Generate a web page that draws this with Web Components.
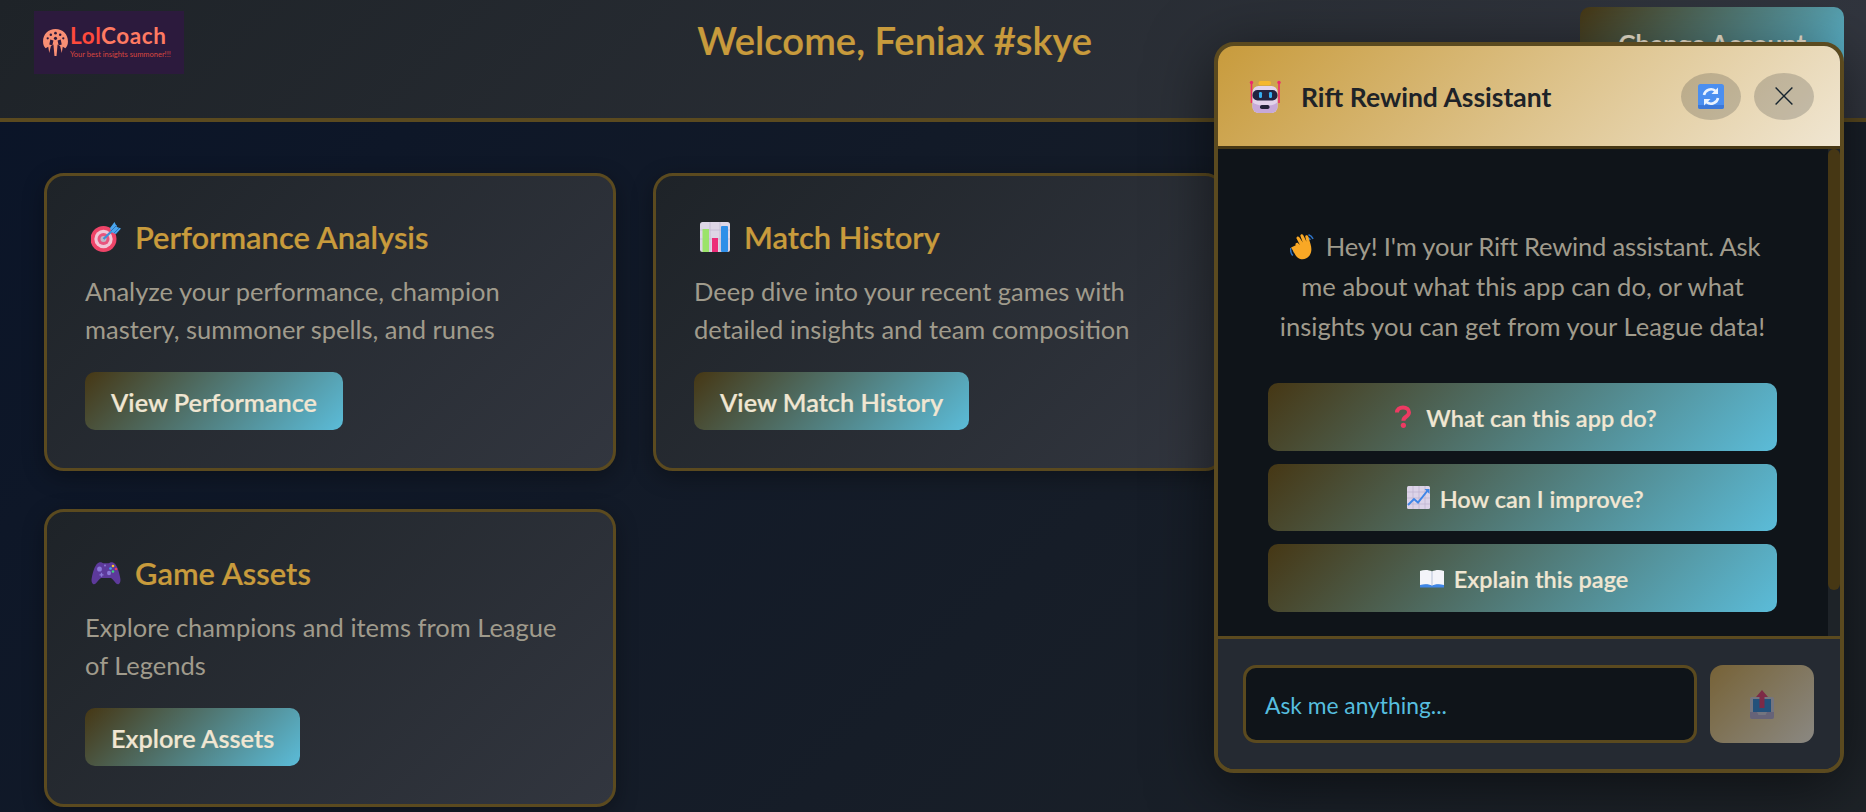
<!doctype html>
<html lang="en"><head><meta charset="utf-8"><title>LolCoach</title>
<style>
html,body{margin:0;height:812px;overflow:hidden}
body{background:linear-gradient(135deg,#0a1428 0%,#1e2328 100%);font-family:Lato,"Open Sans",sans-serif}
</style></head>
<body>
<app-shell>
  <lol-header slot="header" user="Welcome, Feniax #skye"></lol-header>
  <feature-card icon="target" heading="Performance Analysis" action="View Performance">Analyze your performance, champion mastery, summoner spells, and runes</feature-card>
  <feature-card icon="chart" heading="Match History" action="View Match History">Deep dive into your recent games with detailed insights and team composition</feature-card>
  <feature-card icon="game" heading="Game Assets" action="Explore Assets">Explore champions and items from League of Legends</feature-card>
  <chat-panel slot="overlay"></chat-panel>
</app-shell>
<script>
const ICONS={
target:`<svg viewBox="0 0 30 30" width="30" height="30"><circle cx="12.5" cy="17" r="13" fill="#ee4468"/><circle cx="12.5" cy="17" r="9.2" fill="#f1c6d6"/><circle cx="12.5" cy="17" r="6" fill="#e8557e"/><circle cx="12.5" cy="17" r="3" fill="#bfb6c4"/><path d="M12.5 17 23 7" stroke="#3f8fd8" stroke-width="2.4"/><path d="M19 6 23.5 0l2.5 5 4 1.5L25 12l-3-1-2-2z" fill="#4aa6ee"/><path d="M20 9l6-6M23 11l5-5" stroke="#2c74bf" stroke-width="1"/></svg>`,
chart:`<svg viewBox="0 0 30 30" width="30" height="30"><rect width="30" height="30" rx="2.5" fill="#ddd6e6"/><path d="M0 8h30M0 17h30M10 0v30M20 0v30" stroke="#c3bad0" stroke-width=".8"/><rect x="2.5" y="7" width="6.5" height="23" fill="#9be36a"/><rect x="12" y="16" width="6" height="14" fill="#ec2c78"/><rect x="21" y="4" width="7" height="26" rx="1" fill="#2f8fe8"/></svg>`,
game:`<svg viewBox="0 0 30 24" width="30" height="24"><path d="M8 1.5c2-.8 3.5.4 4.5.8h5c1-.4 2.5-1.6 4.5-.8 3.5 1.3 5.8 7.5 7.3 15.7.6 3.5-.6 6-2.3 6-2.500 0-4.500-4.800-7-6.200h-10c-2.500 1.400-4.500 6.200-7 6.200-1.700 0-2.900-2.500-2.300-6C2.200 9 4.500 2.800 8 1.500z" fill="#5d3a9b"/><ellipse cx="8.500" cy="8" rx="2.400" ry="2.600" fill="#8b79d8"/><ellipse cx="18" cy="12" rx="2" ry="2.300" fill="#8b79d8"/><path d="M10.500 11.800v4M8.500 13.800h4" stroke="#8b79d8" stroke-width="1.300"/><circle cx="22" cy="5" r="1.300" fill="#f8c828"/><circle cx="25" cy="8" r="1.300" fill="#ee3a5a"/><circle cx="22" cy="10.500" r="1.300" fill="#3fd27a"/><circle cx="19.500" cy="7.500" r="1.300" fill="#3ba6f0"/><circle cx="14" cy="4.500" r="1" fill="#8b79d8"/></svg>`,
robot:`<svg viewBox="0 0 32 33" width="32" height="33"><path d="M2.500 3v20M30 3v20" stroke="#ee2a6a" stroke-width="1.600"/><circle cx="2.500" cy="2.500" r="1.700" fill="#ee2a6a"/><circle cx="30" cy="2.500" r="1.700" fill="#ee2a6a"/><rect x="9.500" y="1" width="12.500" height="4.200" rx="2" fill="#f5b82e"/><rect x="3.500" y="6" width="25" height="27" rx="6" fill="#e2d3ea"/><path d="M3.500 22v5a6 6 0 0 0 6 6h13a6 6 0 0 0 6-6v-5c-4 5-20 5-25 0z" fill="#c7a9d8"/><rect x="3.500" y="10" width="25" height="10.500" rx="5" fill="#23233f"/><rect x="10" y="12" width="3" height="6" rx="1.200" fill="#36aef0"/><rect x="20" y="12" width="3" height="6" rx="1.200" fill="#36aef0"/><rect x="11" y="25" width="9.500" height="4" rx="1.800" fill="#232338"/></svg>`,
refresh:`<svg viewBox="0 0 26 25" width="26" height="25"><rect width="26" height="25" rx="2.500" fill="#4b8ff0"/><path d="M0 21v2a2 2 0 0 0 2 2h22a2 2 0 0 0 2-2v-2z" fill="#3c78d8"/><path d="M6 11a7 7 0 0 1 11.500-4" stroke="#eaf3ff" stroke-width="2.600" fill="none"/><path d="M20 3.500v6.500h-6.500z" fill="#eaf3ff"/><path d="M20 14a7 7 0 0 1-11.500 4" stroke="#eaf3ff" stroke-width="2.600" fill="none"/><path d="M6 21.500V15h6.500z" fill="#eaf3ff"/></svg>`,
close:`<svg viewBox="0 0 18 18" width="18" height="18"><path d="M.6.6l16.800 16.800M17.400.6.6 17.400" stroke="#16242e" stroke-width="1.400" fill="none"/></svg>`,
wave:`<svg viewBox="0 0 27 26" width="27" height="26"><path d="M.8 14c-.6 3 .2 5.500 2 7.500M3.600 14c-.3 2 0 3.300 1 4.700" stroke="#2e74c8" stroke-width="1.500" fill="none"/><path d="M18.500.7c2 .6 3.600 2 4.600 4.200M18 3.600c1 .4 1.800 1.200 2.300 2.300" stroke="#2e74c8" stroke-width="1.500" fill="none"/><g transform="translate(-2.500,-3.500) scale(1.180)"><path d="M7 12.500c-1-1.200.8-3 2-1.800l1.500 1.500L7.800 7c-.9-1.500 1.200-2.800 2.200-1.300l3 4.500-2-5.300c-.6-1.700 1.700-2.500 2.400-.9l2.700 5.500-1-4c-.4-1.700 1.800-2.200 2.400-.6l2 6.600c1.200 4 1 7.200-1 10-2.500 3.500-7.500 4-10.500 1-2.200-2.200-3.200-5.800-5-8z" fill="#f9a825"/></g></svg>`,
question:`<svg viewBox="0 0 18 23" width="18" height="23"><path d="M3 7.500C3 4.500 5.500 2.500 9 2.500s6 2 6 4.800c0 2-1 3.200-3 4.500-1.700 1.100-2.600 2-2.600 4" stroke="#ee3a62" stroke-width="4" fill="none"/><circle cx="9.400" cy="20.300" r="2.600" fill="#ee3a62"/></svg>`,
trend:`<svg viewBox="0 0 23 23" width="23" height="23"><rect width="23" height="23" rx="1.500" fill="#dcd3e8"/><path d="M0 6h23M0 12h23M0 18h23M6 0v23M12 0v23M18 0v23" stroke="#bdb2cf" stroke-width=".7"/><path d="M1 19l6-6 4 3.500L21 4" stroke="#3f86e8" stroke-width="2" fill="none"/><path d="M17.500 3h5v5z" fill="#3f86e8"/></svg>`,
book:`<svg viewBox="0 0 24 20" width="24" height="20"><path d="M0 17.500V3c4-1.500 8.500-1.500 12 .5 3.500-2 8-2 12-.5v14.500c-4-1-8.500-1-12 .5-3.500-1.500-8-1.500-12-.5z" fill="#f4f4fa"/><path d="M12 3.500V18" stroke="#b7c2d8" stroke-width="1"/><path d="M0 17v2.500h24V17c-4-1-8.500-1-12 .8C8.500 16 4 16 0 17z" fill="#3f86e8"/></svg>`,
outbox:`<svg viewBox="0 0 24 29" width="24" height="29"><rect x="0" y="7" width="24" height="22" rx="2" fill="#c3c0cc"/><rect x="3" y="9" width="18" height="13" fill="#2478c4"/><path d="M0 22h7l1.500 3h7l1.500-3h7v5a2 2 0 0 1-2 2H2a2 2 0 0 1-2-2z" fill="#a79dbd"/><path d="M12 0l6 7h-3.500v11h-5V7H6z" fill="#d42a5c"/></svg>`
};
function def(name,html,init){customElements.define(name,class extends HTMLElement{
  connectedCallback(){if(this.shadowRoot)return;const r=this.attachShadow({mode:'open'});r.innerHTML=html(this);init&&init(r,this)}
})}
def('emoji-icon',h=>`<style>:host{display:inline-flex;flex:none;line-height:0}</style>${ICONS[h.getAttribute('name')]}`);
def('grad-button',h=>`<style>
:host{display:inline-flex;align-items:center;justify-content:center;box-sizing:border-box;height:var(--h,58px);padding:var(--pt,4px) var(--px,26px) 0;padding-left:calc(var(--px,26px) + var(--shift,0px));border-radius:10px;background:linear-gradient(135deg,#463714 0%,#5bbcd9 100%);color:#f0e6d2;font:600 var(--fs,25.3px)/1 Lato,sans-serif;-webkit-text-stroke:.2px #f0e6d2;white-space:nowrap;cursor:pointer}
</style><slot></slot>`);
def('lol-logo',()=>`<style>
:host{display:flex;flex:none;box-sizing:border-box;width:150px;height:63px;background:#2c1a3d;padding:15px 0 0 9px;gap:2px}
svg{flex:none;margin-top:3px}
.t{display:flex;flex-direction:column;font-family:Lato,sans-serif}
.n{font-size:22.500px;line-height:20px;font-weight:700;letter-spacing:.55px;color:#ff7a62}
.n b{color:#ff4a3c;font-weight:700}
.s{font-size:7.500px;line-height:9px;margin-top:4px;color:#d8463f;white-space:nowrap}
</style>
<svg viewBox="0 0 24 26" width="25" height="27"><path d="M12 0C5 0 0 5 0 12c0 3 1 5 2.500 6.500L5 17l1 6 1.500-6.500L10 15l1 11h2l1-11 2.500 1.500L18 23l1-6 2.500 1.500C23 17 24 15 24 12 24 5 19 0 12 0z" fill="#f98f74"/><g fill="#2c1a3d"><circle cx="12" cy="4" r="1.300"/><circle cx="7.500" cy="5.500" r="1.200"/><circle cx="16.500" cy="5.500" r="1.200"/><circle cx="4.500" cy="9" r="1.100"/><circle cx="19.500" cy="9" r="1.100"/><path d="M7 10l3 1-1 5-3-1zM17 10l-3 1 1 5 3-1z"/><circle cx="12" cy="9" r="1.500"/></g></svg>
<div class="t"><span class="n"><b>Lol</b>Coach</span><span class="s">Your best insights summoner!!!</span></div>`);
def('lol-header',h=>`<style>
:host{display:flex;align-items:flex-start;box-sizing:border-box;height:122px;padding:7px 22px 0 34px;background:linear-gradient(135deg,#1e2328 0%,#32363f 100%);border-bottom:4px solid #5b4a1f}
lol-logo{margin-top:4px}
h1{flex:1;margin:0 0 0 25px;padding:9px 0 0;font:600 38.200px/48px Lato,sans-serif;color:#c89b3c;white-space:nowrap;display:flex;justify-content:center;-webkit-text-stroke:.2px #c89b3c}
grad-button{--h:74px;--px:38px;--pt:0px;--fs:26px}
</style>
<lol-logo></lol-logo><h1><span>${h.getAttribute('user')}</span></h1><grad-button>Change Account</grad-button>`);
def('feature-card',h=>`<style>
:host{display:block;box-sizing:border-box;height:298px;padding:38px;border:3px solid #5b4a1f;border-radius:20px;background:linear-gradient(135deg,#1e2328 0%,#32363f 100%);box-shadow:0 6px 22px rgba(0,0,0,.32)}
h2{display:flex;align-items:center;box-sizing:border-box;padding-top:2px;margin:0 0 12px;height:46px;font:600 30.900px/44px Lato,sans-serif;color:#c89b3c;-webkit-text-stroke:.2px #c89b3c}
emoji-icon{margin:-2px 14px 0 6px}
p{margin:0 0 24px;font:400 25.500px/38px Lato,sans-serif;color:#a09b8c}
</style>
<h2><emoji-icon name="${h.getAttribute('icon')}"></emoji-icon>${h.getAttribute('heading')}</h2>
<p><slot></slot></p>
<grad-button>${h.getAttribute('action')}</grad-button>`);
def('chat-panel',()=>`<style>
:host{position:absolute;top:42px;right:22px;width:630px;height:731px;box-sizing:border-box;display:flex;flex-direction:column;border:4px solid #5b4a1f;border-radius:20px;overflow:hidden;background:#252a32;box-shadow:0 13px 64px rgba(0,0,0,.55);z-index:5}
header{flex:none;box-sizing:border-box;height:103px;display:flex;align-items:center;padding:0 26px 0 31px;background:linear-gradient(135deg,#c89b3c 0%,#f0e6d2 100%);border-bottom:3px solid #463714}
header>emoji-icon{margin-top:1px}
h3{margin:2px 0 0 20px;flex:1;font:700 26.500px/1 Lato,sans-serif;color:#1e2328}
.round{flex:none;width:60px;height:47px;border-radius:50%;background:rgba(30,35,40,.2);display:flex;align-items:center;justify-content:center}
.round+.round{margin-left:13px}
.mid{flex:1;min-height:0;display:flex;background:#1e2328}
.scroll{flex:1;min-width:0;background:#0f1419;padding:77px 51px 0 50px;box-sizing:border-box}
.hello{margin:0 0 37px;text-align:center;font:400 25.600px/40px Lato,sans-serif;color:#a09b8c}
.hello emoji-icon{vertical-align:-4px;margin:0 9px 0 5px}
.l1{letter-spacing:-.2px}
.acts{display:flex;flex-direction:column;gap:13px}
.acts grad-button{display:flex;--h:67.500px;--fs:23.500px}
.acts emoji-icon{margin:-4px 9.500px 0 0}
.acts .a{--shift:6px}.acts .a emoji-icon{margin-right:14px}
.acts .b{--shift:6px}
.acts .c{--shift:3.500px}
.bar{flex:none;width:12px;height:441px;border-radius:6px;background:#463714}
.track{flex:none;width:12px;background:#1e2328}
footer{flex:none;box-sizing:border-box;height:133px;border-top:3px solid #5b4a1f;padding:26px 26px 0 25px;display:flex;gap:13px;background:#252a32}
.input{flex:1;box-sizing:border-box;height:78px;border:3px solid #5b4a1f;border-radius:13px;background:#0f1419;display:flex;align-items:center;padding:2px 19px 0;font:400 22.800px/1 Lato,sans-serif;color:#56bedf}
.send{flex:none;width:104px;height:78px;border-radius:13px;background:linear-gradient(135deg,#c89b3c,#f0e6d2);opacity:.5;display:flex;align-items:center;justify-content:center}
</style>
<header><emoji-icon name="robot"></emoji-icon><h3>Rift Rewind Assistant</h3>
<div class="round"><emoji-icon name="refresh"></emoji-icon></div><div class="round"><emoji-icon name="close"></emoji-icon></div></header>
<div class="mid"><div class="scroll">
<p class="hello"><emoji-icon name="wave"></emoji-icon><span class="l1">Hey! I'm your Rift Rewind assistant. Ask</span> me about what this app can do, or what insights you can get from your League data!</p>
<div class="acts">
<grad-button class="a"><emoji-icon name="question"></emoji-icon>What can this app do?</grad-button>
<grad-button class="b"><emoji-icon name="trend"></emoji-icon>How can I improve?</grad-button>
<grad-button class="c"><emoji-icon name="book"></emoji-icon>Explain this page</grad-button>
</div></div><div class="track"><div class="bar"></div></div></div>
<footer><div class="input">Ask me anything...</div><div class="send"><emoji-icon name="outbox"></emoji-icon></div></footer>`);
def('app-shell',()=>`<style>
:host{display:block;position:relative;height:812px;overflow:hidden}
main{display:grid;grid-template-columns:571.500px 571.500px;column-gap:37.500px;row-gap:38px;padding:51px 0 0 44px}
</style><slot name="header"></slot><main><slot></slot></main><slot name="overlay"></slot>`);
</script>
</body></html>
